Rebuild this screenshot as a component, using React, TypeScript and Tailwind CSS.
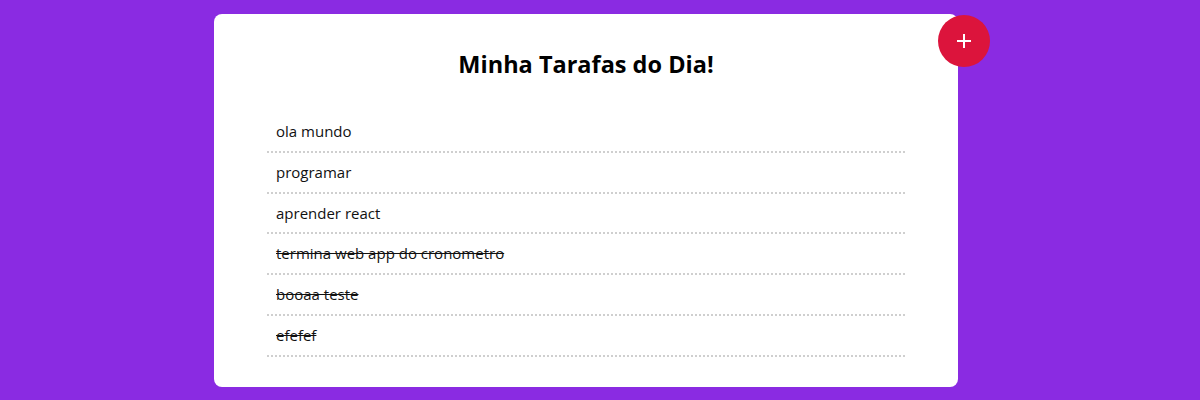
import React from "react";

const items = [
  { text: "ola mundo", done: false },
  { text: "programar", done: false },
  { text: "aprender react", done: false },
  { text: "termina web app do cronometro", done: true },
  { text: "booaa teste", done: true },
  { text: "efefef", done: true },
];

export default function App() {
  return (
    <div className="w-[1200px] h-[400px] bg-[#8a2be2] pt-[14px] font-['Open_Sans',sans-serif] text-black">
      <div className="relative ml-[214px] w-[744px] h-[373px] bg-white rounded-[8px] pt-[34px] px-[53px]">
        <h1 className="text-center text-[23.5px] leading-[32px] font-bold">Minha Tarafas do Dia!</h1>
        <ul className="mt-[32px]">
          {items.map((it) => (
            <li
              key={it.text}
              className={`px-[9px] py-[9px] text-[15px] leading-[20.8px] text-[#111] border-b-2 border-dotted border-[#cfcfcf] ${it.done ? "line-through" : ""}`}
            >
              {it.text}
            </li>
          ))}
        </ul>
        <button className="absolute right-[-32px] top-[1px] w-[52px] h-[52px] rounded-full bg-[#dc143c] flex items-center justify-center">
          <svg width="18" height="18" viewBox="0 0 18 18">
            <path d="M9 2v14M2 9h14" stroke="white" strokeWidth="2" />
          </svg>
        </button>
      </div>
    </div>
  );
}
